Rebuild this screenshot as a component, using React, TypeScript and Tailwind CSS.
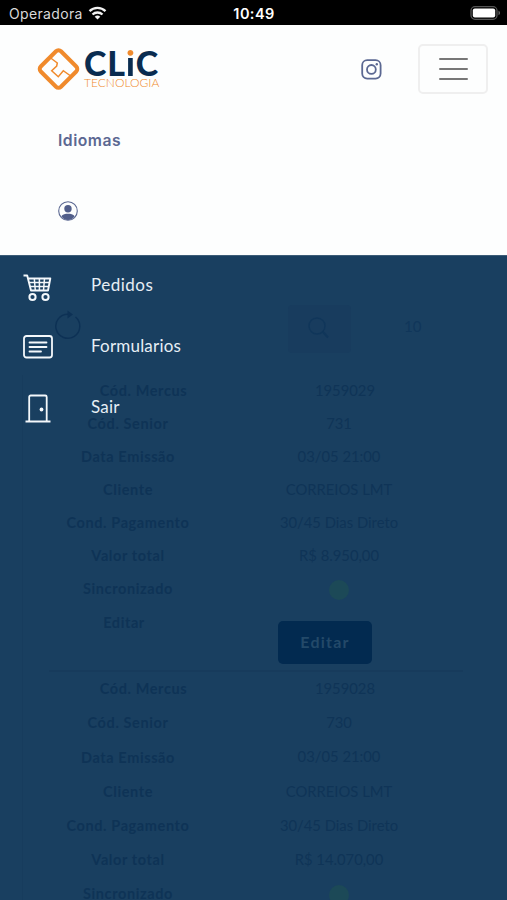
import * as React from "react";
import { clsx } from "clsx";

interface Order {
  mercus: string;
  senior: string;
  date: string;
  client: string;
  terms: string;
  total: string;
}

const orders: Order[] = [
  {
    mercus: "1959029",
    senior: "731",
    date: "03/05 21:00",
    client: "CORREIOS LMT",
    terms: "30/45 Dias Direto",
    total: "R$ 8.950,00",
  },
  {
    mercus: "1959028",
    senior: "730",
    date: "03/05 21:00",
    client: "CORREIOS LMT",
    terms: "30/45 Dias Direto",
    total: "R$ 14.070,00",
  },
];

function StatusBar() {
  return (
    <div className="grid h-[25px] grid-cols-3 items-center bg-black pl-[9px] pr-[6px] pt-[3px] text-[#d9d9d9]">
      <div className="flex items-center gap-[5px]">
        <span className="font-[Inter] text-[14px] leading-none tracking-[0.35px]">Operadora</span>
        <svg className="-mt-[2px]" width="19" height="14" viewBox="0 0 18 14" fill="none" stroke="#f2f2f2" strokeWidth="2.3">
          <path d="M1 5.2a11.5 11.5 0 0 1 16 0" />
          <path d="M4 8.5a7.2 7.2 0 0 1 10 0" />
          <path d="M9 13.6 6.2 10.8a4 4 0 0 1 5.6 0Z" fill="#f2f2f2" stroke="none" />
        </svg>
      </div>
      <span className="-ml-[2px] text-center font-[Inter] text-[14.5px] leading-none font-semibold tracking-[0.4px] text-white">
        10:49
      </span>
      <svg className="-mt-[2px] justify-self-end" width="31" height="14" viewBox="0 0 31 14">
        <rect x="1" y="0.7" width="26" height="12.6" rx="4" fill="none" stroke="#555" strokeWidth="1.3" />
        <rect x="2.8" y="2.4" width="22.4" height="9.2" rx="2" fill="#fff" />
        <path d="M28.5 4.8c2 .7 2 3.7 0 4.4Z" fill="#666" />
      </svg>
    </div>
  );
}

function Logo() {
  return (
    <div className="flex h-[44px] w-[126px] gap-[3px]">
      <svg className="shrink-0" width="43" height="44" viewBox="0 0 43 44" fill="none" stroke="#f08a2c">
        <rect x="7.2" y="7.7" width="28.6" height="28.6" rx="3.5" strokeWidth="4" transform="rotate(45 21.5 22)" />
        <path d="M13 10.5 20.3 16 19.7 19l-5 4.7 6.6 6 5-6 7.4 5.3" strokeWidth="1.5" />
      </svg>
      <div className="flex flex-col">
        <div className="mt-px flex h-[29px] items-center pl-px font-[Lato] text-[34px] leading-[29px] font-black tracking-[0.9px] text-[#0a2c50]">
          CL
          <span className="bg-linear-to-b from-[#f08a2c] from-35% to-[#0a2c50] to-35% bg-clip-text text-transparent">
            i
          </span>
          C
        </div>
        <span className="pl-px font-[Lato] text-[12px] leading-[12px] font-light text-[#f08a2c]">TECNOLOGIA</span>
      </div>
    </div>
  );
}

function InstagramIcon() {
  return (
    <svg width="21" height="21" viewBox="0 0 21 21" fill="none" stroke="#5b6892" strokeWidth="1.8">
      <rect x="1.2" y="1.2" width="18.4" height="18.4" rx="5" />
      <circle cx="10.4" cy="10.4" r="4.4" />
      <circle cx="15.8" cy="5.2" r="1.2" fill="#5b6892" stroke="none" />
    </svg>
  );
}

function UserIcon() {
  return (
    <svg width="20" height="20" viewBox="0 0 20 20">
      <circle cx="10" cy="10" r="9.3" fill="none" stroke="#5b6892" strokeWidth="1.1" />
      <circle cx="10" cy="7.7" r="3.7" fill="#515e8a" />
      <path d="M3.3 15.2c1.5-2 4-2.5 6.7-2.5s5.2.5 6.7 2.5A8.6 8.6 0 0 1 10 19a8.6 8.6 0 0 1-6.7-3.8Z" fill="#515e8a" />
    </svg>
  );
}

function Header() {
  return (
    <header className="h-[229.5px] bg-[#fdfefe]">
      <div className="flex items-start pl-[37px] pr-[19px] pt-[19px]">
        <div className="pt-[3px]">
          <Logo />
        </div>
        <div className="ml-auto pt-[15px]">
          <InstagramIcon />
        </div>
        <button
          type="button"
          className="ml-[36px] flex h-[50px] w-[70px] flex-col items-center justify-center gap-[7.5px] rounded-[5px] border-2 border-[#efefef]"
        >
          <span className="h-[2.3px] w-[29px] rounded-full bg-[#777]" />
          <span className="h-[2.3px] w-[29px] rounded-full bg-[#777]" />
          <span className="h-[2.3px] w-[29px] rounded-full bg-[#777]" />
        </button>
      </div>
      <div className="flex flex-col items-start pl-[58px] pt-[37px]">
        <span className="font-[Inter] text-[15.7px] leading-5 font-semibold tracking-[0.5px] text-[#5b6892]">
          Idiomas
        </span>
        <div className="pt-[50px]">
          <UserIcon />
        </div>
      </div>
    </header>
  );
}

function CartIcon() {
  return (
    <svg width="30" height="28" viewBox="0 0 30 28" fill="none" stroke="#f4f8fb" strokeWidth="1.5" strokeLinejoin="round">
      <path d="M.5 1.5h3.7l3.8 15h17l2.3-12H5" strokeWidth="1.9" />
      <path d="M6 8.5h20.5M7 12.5h19M11.3 4.5l1 12M16.4 4.5v12M21.5 4.5l-1 12" />
      <circle cx="9.5" cy="23" r="3.1" strokeWidth="2" />
      <circle cx="22.5" cy="23" r="3.1" strokeWidth="2" />
    </svg>
  );
}

function FormIcon() {
  return (
    <svg width="30" height="24" viewBox="0 0 30 24" fill="none" stroke="#f4f8fb" strokeWidth="1.8" strokeLinecap="round">
      <rect x="1" y="1" width="28" height="21.5" rx="2.5" />
      <path d="M6.5 7.5h17M6.5 12h17M6.5 16.5h11.5" />
    </svg>
  );
}

function DoorIcon() {
  return (
    <svg width="26" height="29" viewBox="0 0 26 29" fill="none" stroke="#f4f8fb" strokeWidth="1.8">
      <path d="M.5 27.5h25M4.2 27.5V3a1.5 1.5 0 0 1 1.5-1.5h14.5A1.5 1.5 0 0 1 21.7 3v24.5" />
      <circle cx="16.5" cy="15.5" r="1.9" fill="#f4f8fb" stroke="none" />
    </svg>
  );
}

const menu = [
  { label: "Pedidos", icon: <CartIcon />, tracking: "tracking-[0.5px]", offset: "pb-[1px]" },
  { label: "Formularios", icon: <FormIcon />, tracking: "tracking-[0.2px]", offset: "pb-[5px]" },
  { label: "Sair", icon: <DoorIcon />, tracking: "tracking-[0.2px]", offset: "pb-[3px]" },
];

function SideMenu() {
  return (
    <nav className="absolute inset-x-0 top-0 pt-[2px]">
      {menu.map((item) => (
        <a key={item.label} className="flex h-[61px] items-center">
          <span className={clsx("ml-[22px] flex w-[31px] justify-center", item.offset)}>{item.icon}</span>
          <span className={clsx("-mt-[7px] ml-[38px] text-[17px] leading-6 text-[#e6eef5]", item.tracking)}>
            {item.label}
          </span>
        </a>
      ))}
    </nav>
  );
}

interface RowProps {
  label: string;
  children?: React.ReactNode;
  className?: string;
}

function Row({ label, children, className }: RowProps) {
  return (
    <div className={clsx("grid grid-cols-[256px_166px] items-center text-center", className)}>
      <span className="text-[14.5px] font-bold tracking-[0.6px] text-[#0e3356]">{label}</span>
      <span className="-mt-[2px] flex justify-center text-[14.8px] whitespace-nowrap text-[#0f3457]">{children}</span>
    </div>
  );
}

function SyncDot() {
  return <span className="mt-[4px] h-[20px] w-[20px] rounded-full bg-[#1c4957]" />;
}

function OrderCard({ order, row }: { order: Order; row: string }) {
  return (
    <>
      <Row label="Cód. Mercus" className={clsx(row, "[&>*:first-child]:pl-[31px] [&>*:last-child]:pl-[12px]")}>
        {order.mercus}
      </Row>
      <Row label="Cód. Senior" className={row}>{order.senior}</Row>
      <Row label="Data Emissão" className={row}>{order.date}</Row>
      <Row label="Cliente" className={row}>{order.client}</Row>
      <Row label="Cond. Pagamento" className={row}>{order.terms}</Row>
      <Row label="Valor total" className={row}>{order.total}</Row>
      <Row label="Sincronizado" className={row}>
        <SyncDot />
      </Row>
    </>
  );
}

function Toolbar() {
  return (
    <div className="flex h-[119px] items-start pt-[49px]">
      <svg className="ml-[54px] mt-[4px]" width="28" height="32" viewBox="0 0 28 32" fill="none" stroke="#0d3155" strokeWidth="1.5">
        <path d="M21.5 8A12 12 0 1 1 14 5.2" />
        <path d="M13.5 1.5v8l5.500-4Z" fill="#0d3155" stroke="none" />
      </svg>
      <div className="ml-[206px] flex h-[48px] w-[63px] items-center justify-center rounded bg-[#183c5e]">
        <svg className="-mt-[1px] -ml-[2px]" width="21" height="22" viewBox="0 0 21 22" fill="none" stroke="#10365a">
          <circle cx="9" cy="9" r="8" strokeWidth="1.4" />
          <path d="m14.5 14.5 5.5 6" strokeWidth="2.3" />
        </svg>
      </div>
      <span className="ml-[53px] mt-[11px] text-[15px] leading-5 text-[#10365a]">10</span>
    </div>
  );
}

function OrdersPage() {
  return (
    <section className="flex flex-col">
      <Toolbar />
      <div className="ml-[22px] border-l border-[#173c5d]">
        <div className="-ml-[23px]">
          <OrderCard order={orders[0]} row="h-[33px]" />
          <div className="grid h-[64.5px] grid-cols-[256px_auto] items-start">
            <span className="pt-[7px] pr-[8px] text-center text-[14.5px] leading-5 font-bold tracking-[0.6px] text-[#0e3356]">
              Editar
            </span>
            <button
              type="button"
              className="ml-[22px] mt-[15px] h-[43px] w-[94px] rounded-[5px] bg-[#022a50] text-[16px] font-bold tracking-[1.2px] text-[#234969]"
            >
              Editar
            </button>
          </div>
          <div className="ml-[49px] w-[414px] border-t-2 border-[#173b5c]" />
          <OrderCard order={orders[1]} row="h-[34.2px]" />
        </div>
      </div>
    </section>
  );
}

export default function App() {
  return (
    <div className="flex h-[900px] w-[507px] flex-col overflow-hidden bg-[#193f60] font-[Lato,sans-serif]">
      <StatusBar />
      <Header />
      <main className="relative min-h-0 flex-1 overflow-hidden border-t border-[#3c5c77]">
        <OrdersPage />
        <SideMenu />
      </main>
    </div>
  );
}
